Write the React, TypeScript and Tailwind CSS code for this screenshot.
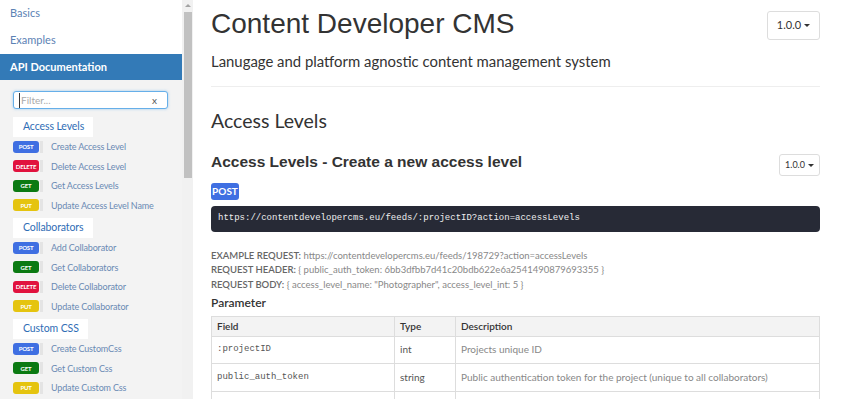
import React from "react";

type Method = "POST" | "GET" | "PUT" | "DELETE";

const badgeColor: Record<Method, string> = {
  POST: "bg-[#3f6fe2]",
  GET: "bg-[#0b7a12]",
  PUT: "bg-[#e5c40f]",
  DELETE: "bg-[#e1123e]",
};

const groups: { title: string; items: [Method, string][] }[] = [
  {
    title: "Access Levels",
    items: [
      ["POST", "Create Access Level"],
      ["DELETE", "Delete Access Level"],
      ["GET", "Get Access Levels"],
      ["PUT", "Update Access Level Name"],
    ],
  },
  {
    title: "Collaborators",
    items: [
      ["POST", "Add Collaborator"],
      ["GET", "Get Collaborators"],
      ["DELETE", "Delete Collaborator"],
      ["PUT", "Update Collaborator"],
    ],
  },
  {
    title: "Custom CSS",
    items: [
      ["POST", "Create CustomCss"],
      ["GET", "Get Custom Css"],
      ["PUT", "Update Custom Css"],
    ],
  },
];

const sans = "font-['Lato','Noto_Sans',sans-serif]";
const arial = "font-['Liberation_Sans',Arial,sans-serif]";
const mono = "font-['Liberation_Mono','DejaVu_Sans_Mono',monospace]";

function Caret() {
  return <span className="ml-[3px] inline-block h-0 w-0 border-x-[3px] border-t-[3px] border-x-transparent border-t-[#333] align-middle" />;
}

function Sidebar() {
  return (
    <aside className={`flex w-[182px] shrink-0 flex-col ${sans}`}>
      <a className="flex h-[27px] shrink-0 items-center pl-[10px] text-[11px] text-[#5b82b4]">Basics</a>
      <a className="flex h-[27px] shrink-0 items-center pl-[10px] text-[11px] text-[#5b82b4]">Examples</a>
      <div className="flex h-[26px] shrink-0 items-center bg-[#337ab7] pl-[10px] text-[11px] font-bold text-white">
        API Documentation
      </div>
      <div className="flex flex-1 shrink-0 flex-col bg-[#f3f3f3] pl-[13px] pt-[11px]">
        <div className="flex h-[18px] w-[155px] shrink-0 items-center justify-between rounded-[3px] border border-[#66afe9] bg-white pl-[5px] pr-[10px] text-[10px] shadow-[0_0_3px_rgba(102,175,233,0.6)]">
          <span className="border-l border-[#333] pl-px text-[#aaa]">Filter...</span>
          <span className="text-[#555]">x</span>
        </div>
        {groups.map((g, gi) => (
          <div key={g.title} className={`flex shrink-0 flex-col ${gi === 0 ? "mt-[8px]" : "mt-[3px]"}`}>
            <div className="flex h-[20px] w-fit items-center bg-white pl-[10px] pr-[9px] text-[10.5px] tracking-[-0.1px] text-[#2f6db5]">
              {g.title}
            </div>
            {g.items.map(([m, label]) => (
              <div key={label} className="flex h-[19.5px] items-center">
                <span
                  className={`flex h-[12px] w-[26px] items-center justify-center rounded-[3px] text-[6px] font-bold tracking-[-0.2px] text-white ${badgeColor[m]}`}
                >
                  {m}
                </span>
                <span className="ml-[1px] h-[12px] w-[3px] bg-[#e4e4e4]" />
                <span className="ml-[8px] text-[9px] tracking-[-0.15px] text-[#6a8ab4]">{label}</span>
              </div>
            ))}
          </div>
        ))}
      </div>
    </aside>
  );
}

function ScrollBar() {
  return (
    <div className="flex w-[11px] shrink-0 flex-col items-center bg-[#f1f1f1]">
      <div className="mt-[4px] h-0 w-0 border-x-[3px] border-b-[3px] border-x-transparent border-b-[#a3a3a3]" />
      <div className="mt-[5px] h-[166px] w-[8px] bg-[#c1c1c1]" />
    </div>
  );
}

function Main() {
  return (
    <main className={`flex-1 pl-[18px] pr-[25px] text-[#333] ${sans}`}>
      <div className="flex items-start justify-between pt-[9px]">
        <h1 className={`text-[28px] leading-[1.1] text-[#333] ${arial}`}>Content Developer CMS</h1>
        <button className="mt-[2px] flex h-[29px] w-[53px] items-center justify-center rounded-[3px] border border-[#ddd] bg-white text-[11px] text-[#333]">
          1.0.0
          <Caret />
        </button>
      </div>
      <p className="mt-[12px] text-[14.9px] leading-[18px]">Lanugage and platform agnostic content management system</p>
      <div className="mt-[16px] border-t border-[#eee]" />
      <h2 className="mt-[22px] text-[19.5px] leading-[24px] text-[#333]">Access Levels</h2>
      <div className="mt-[13px] flex items-start justify-between">
        <h3 className={`pt-[6px] text-[15.5px] font-bold leading-[20px] ${arial}`}>
          Access Levels - Create a new access level
        </h3>
        <button className="mt-[8px] flex h-[22px] w-[41px] items-center justify-center rounded-[3px] border border-[#ddd] bg-white text-[9px] text-[#333]">
          1.0.0
          <Caret />
        </button>
      </div>
      <div className="mt-[7px] flex h-[17px] w-[28px] items-center justify-center rounded-[3px] bg-[#3f6fe2] text-[10px] font-bold text-white">
        POST
      </div>
      <div className={`mt-[6px] flex h-[26px] items-center rounded-[4px] bg-[#272a36] pl-[7px] text-[9px] text-[#eee] ${mono}`}>
        https://contentdevelopercms.eu/feeds/:projectID?action=accessLevels
      </div>
      <div className="mt-[17px] text-[9.5px] leading-[14.3px] text-[#888]">
        <div>
          <b className="font-semibold text-[#666]">EXAMPLE REQUEST:</b> https://contentdevelopercms.eu/feeds/198729?action=accessLevels
        </div>
        <div>
          <b className="font-semibold text-[#666]">REQUEST HEADER:</b> {"{ public_auth_token: 6bb3dfbb7d41c20bdb622e6a2541490879693355 }"}
        </div>
        <div>
          <b className="font-semibold text-[#666]">REQUEST BODY:</b> {'{ access_level_name: "Photographer", access_level_int: 5 }'}
        </div>
      </div>
      <div className="mt-[3px] text-[12px] font-semibold leading-[16px] text-[#333]">Parameter</div>
      <table className="mt-[5px] w-full border-collapse text-[10px]">
        <thead>
          <tr className="h-[20px] bg-[#f3f3f3]">
            <th className="w-[183px] border border-[#ddd] pl-[5px] text-left font-semibold">Field</th>
            <th className="w-[61px] border border-[#ddd] pl-[5px] text-left font-semibold">Type</th>
            <th className="border border-[#ddd] pl-[5px] text-left font-semibold">Description</th>
          </tr>
        </thead>
        <tbody>
          <tr className="h-[27px]">
            <td className={`border border-[#ddd] pl-[5px] text-[9px] text-[#555] ${mono}`}>:projectID</td>
            <td className="border border-[#ddd] pl-[5px] text-[#555]">int</td>
            <td className="border border-[#ddd] pl-[5px] text-[#888]">Projects unique ID</td>
          </tr>
          <tr className="h-[28px]">
            <td className={`border border-[#ddd] pl-[5px] text-[9px] text-[#555] ${mono}`}>public_auth_token</td>
            <td className="border border-[#ddd] pl-[5px] text-[#555]">string</td>
            <td className="border border-[#ddd] pl-[5px] text-[#888]">
              Public authentication token for the project (unique to all collaborators)
            </td>
          </tr>
          <tr className="h-[28px]">
            <td className="border border-[#ddd]" />
            <td className="border border-[#ddd]" />
            <td className="border border-[#ddd]" />
          </tr>
        </tbody>
      </table>
    </main>
  );
}

export default function App() {
  return (
    <div className="flex h-[399px] w-[845px] overflow-hidden bg-white">
      <Sidebar />
      <ScrollBar />
      <Main />
    </div>
  );
}
